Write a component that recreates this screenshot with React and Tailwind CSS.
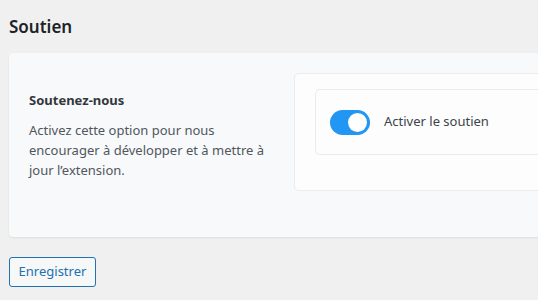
import React, { useState } from 'react';

export default function App() {
  const [enabled, setEnabled] = useState(true);

  return (
    <div className="min-h-[300px] w-[538px] overflow-hidden bg-[#f0f0f1] pl-[9px] pt-[15px] font-['Noto_Sans',sans-serif] text-[13px] text-[#3c434a]">
      {/* Section title */}
      <h2 className="text-[17px] font-semibold leading-[24px] text-[#1d2327]">Soutien</h2>

      {/* Settings card */}
      <div className="mt-[14px] flex h-[184px] w-[560px] rounded-l-[4px] bg-[#f8f9fa] pl-[20px] pt-[20px] shadow-[0_1px_2px_rgba(0,0,0,0.08)]">
        <div className="w-[245px] shrink-0 pt-[17px]">
          <h3 className="text-[13px] font-bold leading-[20px] text-[#32373c]">Soutenez-nous</h3>
          <p className="mt-[10px] leading-[20px] text-[#50575e]">
            Activez cette option pour nous encourager à développer et à mettre à jour l’extension.
          </p>
        </div>

        <div className="ml-[20px] h-[118px] flex-1 rounded-l-[5px] border border-r-0 border-[#ececec] bg-[#fdfdfd] pl-[20px] pt-[15px]">
          <div className="flex h-[66px] items-center rounded-l-[5px] border border-r-0 border-[#ebebeb] bg-[#fdfdfd] pl-[14px]">
            <button
              onClick={() => setEnabled(!enabled)}
              className={`relative h-[25px] w-[40px] rounded-full ${enabled ? 'bg-[#2196f3]' : 'bg-[#c3c4c7]'}`}
            >
              <span
                className={`absolute top-[3px] h-[19px] w-[19px] rounded-full bg-white ${enabled ? 'right-[3px]' : 'left-[3px]'}`}
              />
            </button>
            <span className="ml-[14px] text-[13px] text-[#3c434a]">Activer le soutien</span>
          </div>
        </div>
      </div>

      {/* Save */}
      <button className="mt-[20px] h-[30px] w-[87px] rounded-[3px] border border-[#2271b1] bg-[#f6f7f7] text-[13px] text-[#2271b1]">
        Enregistrer
      </button>
    </div>
  );
}
